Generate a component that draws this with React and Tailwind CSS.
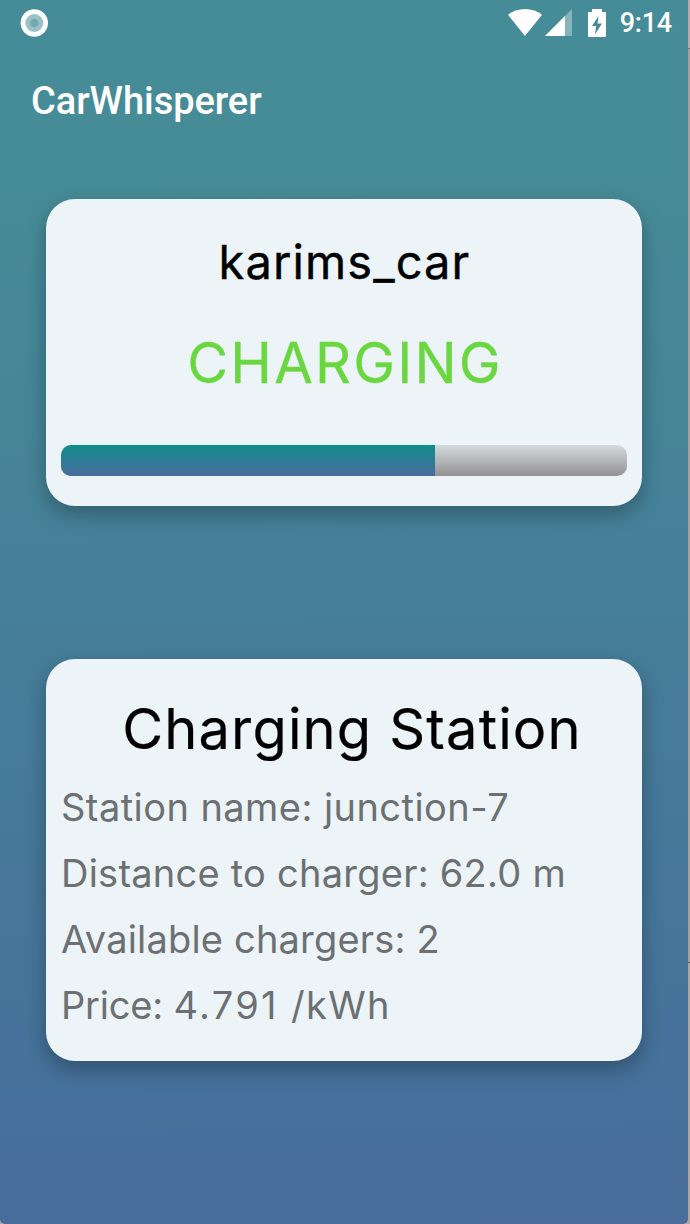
const details = [
  { key: "name", parts: [{ text: "Station name: junction-7", spacing: "tracking-[0.44px]" }] },
  { key: "distance", parts: [{ text: "Distance to charger: 62.0 m", spacing: "tracking-[0.24px]" }] },
  { key: "available", parts: [{ text: "Available chargers: 2", spacing: "tracking-[0.18px]" }] },
  {
    key: "price",
    parts: [
      { text: "Price: ", spacing: "tracking-[-0.2px]" },
      { text: "4.791", spacing: "tracking-[2.3px]" },
      { text: " /kWh", spacing: "tracking-[1.4px]" },
    ],
  },
];

const cardClass =
  "mx-auto w-[596px] rounded-[29px] bg-[#ecf4f8] shadow-[0_8px_20px_1px_rgba(0,0,0,0.27)]";

function StatusBar() {
  return (
    <header className="flex h-[46px] items-center justify-between pl-5 pr-4 text-white">
      <svg className="size-7" viewBox="0 0 28 28">
        <circle cx="14.300" cy="14" r="13.7" fill="#fff" />
        <circle cx="14.300" cy="14" r="9" fill="#9bc1c7" />
        <circle cx="14.300" cy="14" r="4.2" fill="#75a9b1" />
      </svg>
      <div className="flex items-center">
        <svg className="h-7 w-[34px]" viewBox="0 0 34 28" fill="#fff">
          <path d="M0 5.8C4.7 2.2 10.5 0 17 0s12.300 2.200 17 5.800L17 27z" />
        </svg>
        <svg className="ml-[3px] h-7 w-[27px]" viewBox="0 0 27 28" fill="#fff">
          <path opacity=".35" d="M27 0v27H0z" />
          <path d="M20 7v20H0z" />
        </svg>
        <svg className="ml-4 h-7 w-[18px]" viewBox="0 0 18 28">
          <path
            fill="#fff"
            fillRule="evenodd"
            d="M4 0h10v3h3Q18 3 18 4v23Q18 28 17 28H1Q0 28 0 27V4Q0 3 1 3h3zM10.500 7L4 17h4.200L7 25.500 14 14.500H9.500z"
          />
        </svg>
        <span className="ml-[14px] font-[Roboto] text-[27px] leading-7 font-medium tracking-[-0.2px]">9:14</span>
      </div>
    </header>
  );
}

export default function App() {
  return (
    <div className="flex h-[1224px] w-[690px] bg-[#aaa6a4] font-[Inter,sans-serif]">
      <main className="h-full w-[688px] overflow-hidden rounded-b-[5px] bg-[linear-gradient(179deg,#468c98_0%,#468c97_14%,#46719b_88%,#496c9b_100%)]">
        <StatusBar />
        <h1 className="mt-[31px] pl-[31px] font-[Roboto] text-[38px] leading-[48px] font-medium tracking-[-0.05px] text-white">
          CarWhisperer
        </h1>

        <section className={`${cardClass} mt-[74px] h-[306.5px] px-[15px]`}>
          <h2 className="pt-[35px] pl-px text-center text-[47px] leading-[56px] tracking-[1.1px] text-black [-webkit-text-stroke:0.4px]">
            karims_car
          </h2>
          <p className="mt-[38px] pl-[2px] text-center text-[56px] leading-[70px] tracking-[2.2px] text-[#6bd740] [-webkit-text-stroke:0.3px]">
            CHARGING
          </p>
          <div className="mt-[47px] flex h-[30.5px] overflow-hidden rounded-[10px] bg-[linear-gradient(#d6dadd,#929293)]">
            <div className="w-[374px] bg-[linear-gradient(#108d8b,#4a6b9e)]" />
          </div>
        </section>

        <section className={`${cardClass} mt-[153px] h-[402px] px-[15px]`}>
          <h2 className="pt-[35px] pl-[16px] text-center text-[56px] leading-[70px] tracking-[1.15px] text-black [-webkit-text-stroke:0.2px]">
            Charging Station
          </h2>
          <ul className="mt-[10px] text-[38px] leading-[66px] text-[#6c7072]">
            {details.map((d) => (
              <li key={d.key} className="whitespace-pre">
                {d.parts.map((p) => (
                  <span key={p.text} className={p.spacing}>
                    {p.text}
                  </span>
                ))}
              </li>
            ))}
          </ul>
        </section>
      </main>
      <div className="flex w-[2px] flex-col">
        <div className="h-[49px] border-b border-[#777576] bg-[#b5abac]" />
        <div className="h-[914px] border-b border-[#55565a] bg-[#a39f9f]" />
      </div>
    </div>
  );
}
